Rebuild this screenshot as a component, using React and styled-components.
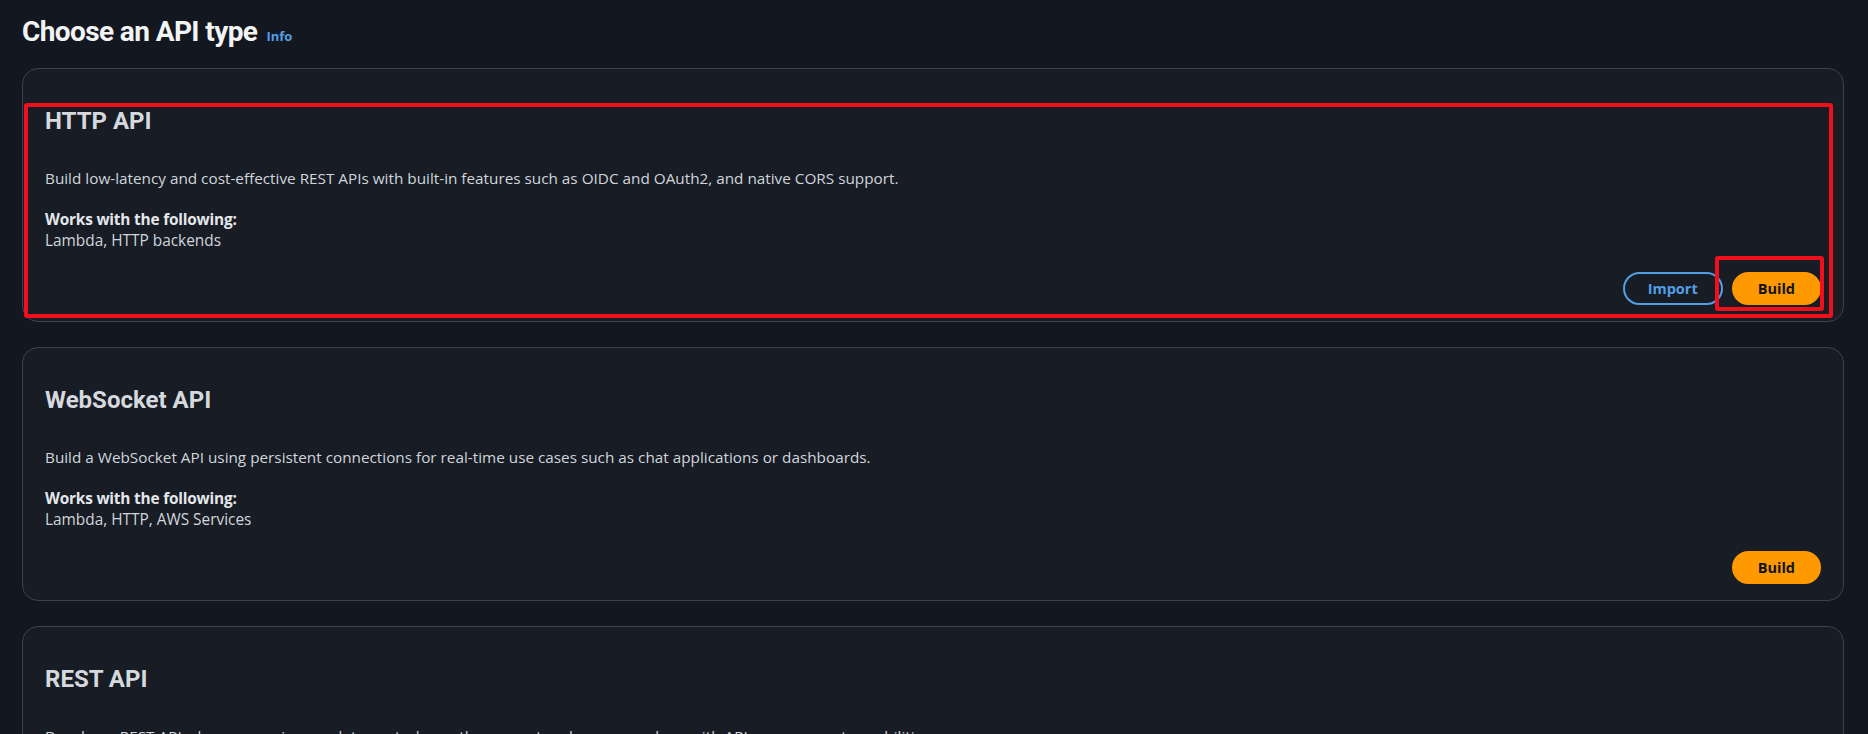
import React from "react";
import styled, { createGlobalStyle } from "styled-components";

const Global = createGlobalStyle`
  html, body {
    margin: 0;
    padding: 0;
    background: #131720;
  }
  body {
    font-family: "Open Sans", "Noto Sans", sans-serif;
    color: #d1d5db;
    -webkit-font-smoothing: antialiased;
  }
`;

const Page = styled.main`
  padding: 12px 24px 0 22px;
  height: 734px;
  overflow: hidden;
  box-sizing: border-box;
`;

const TitleRow = styled.div`
  display: flex;
  align-items: baseline;
  gap: 9px;
  height: 44px;
  margin-bottom: 12px;
`;

const Title = styled.h1`
  margin: 0;
  font-family: Roboto, "Open Sans", sans-serif;
  font-size: 28px;
  line-height: 40px;
  font-weight: 700;
  color: #f2f3f3;
  letter-spacing: -0.6px;
`;

const InfoLink = styled.a`
  font-size: 13px;
  font-weight: 700;
  color: #539fe5;
  text-decoration: none;
`;

const CardList = styled.div`
  display: flex;
  flex-direction: column;
  gap: 25px;
`;

const Card = styled.section`
  position: relative;
  background: #171c25;
  border: 1px solid #3a424f;
  border-radius: 16px;
  padding: 37px 22px 16px 22px;
  display: flex;
  flex-direction: column;
`;

const CardTitle = styled.h2`
  margin: 0;
  font-family: Roboto, "Open Sans", sans-serif;
  font-size: 24px;
  line-height: 30px;
  font-weight: 700;
  color: #d5d9de;
`;

const Description = styled.p`
  margin: 32px 0 0 0;
  font-size: 15.3px;
  line-height: 20px;
`;

const WorksWith = styled.div`
  margin-top: 21px;
  font-size: 15.4px;
  line-height: 21px;
`;

const WorksLabel = styled.div`
  font-weight: 700;
  color: #e4e7ea;
  letter-spacing: -0.2px;
`;

const Actions = styled.div`
  display: flex;
  justify-content: flex-end;
  gap: 9px;
  margin-top: 21px;
`;

const Button = styled.button`
  box-sizing: border-box;
  height: 33px;
  padding: 0 ${(p) => (p.$variant === "primary" ? 24 : 20)}px;
  min-width: ${(p) => (p.$variant === "primary" ? 89 : 100)}px;
  border-radius: 18px;
  border: 2px solid ${(p) => (p.$variant === "primary" ? "#ff9900" : "#539fe5")};
  background: ${(p) => (p.$variant === "primary" ? "#ff9900" : "transparent")};
  color: ${(p) => (p.$variant === "primary" ? "#0f141a" : "#539fe5")};
  font-family: inherit;
  font-size: 14.5px;
  font-weight: 700;
  cursor: pointer;
`;

const Annotation = styled.div`
  position: absolute;
  box-sizing: border-box;
  border: ${(p) => p.$w}px solid #f0101c;
  border-radius: 3px;
  pointer-events: none;
`;

const cards = [
  {
    title: "HTTP API",
    desc: "Build low-latency and cost-effective REST APIs with built-in features such as OIDC and OAuth2, and native CORS support.",
    works: "Lambda, HTTP backends",
    importBtn: true,
    annotated: true,
  },
  {
    title: "WebSocket API",
    desc: "Build a WebSocket API using persistent connections for real-time use cases such as chat applications or dashboards.",
    works: "Lambda, HTTP, AWS Services",
  },
  {
    title: "REST API",
    desc: "Develop a REST API where you gain complete control over the request and response along with API management capabilities.",
    works: "Lambda, HTTP, AWS Services",
    importBtn: true,
  },
];

export default function App() {
  return (
    <>
      <Global />
      <Page>
        <TitleRow>
          <Title>Choose an API type</Title>
          <InfoLink href="#">Info</InfoLink>
        </TitleRow>
        <CardList>
          {cards.map((c) => (
            <Card key={c.title}>
              <CardTitle>{c.title}</CardTitle>
              <Description>{c.desc}</Description>
              <WorksWith>
                <WorksLabel>Works with the following:</WorksLabel>
                <div>{c.works}</div>
              </WorksWith>
              <Actions>
                {c.importBtn && <Button>Import</Button>}
                <Button $variant="primary">Build</Button>
              </Actions>
              {c.annotated && (
                <>
                  <Annotation $w={4} style={{ left: 1, top: 34, right: 10, bottom: 3 }} />
                  <Annotation $w={4} style={{ right: 19, top: 187, width: 109, height: 55 }} />
                </>
              )}
            </Card>
          ))}
        </CardList>
      </Page>
    </>
  );
}
